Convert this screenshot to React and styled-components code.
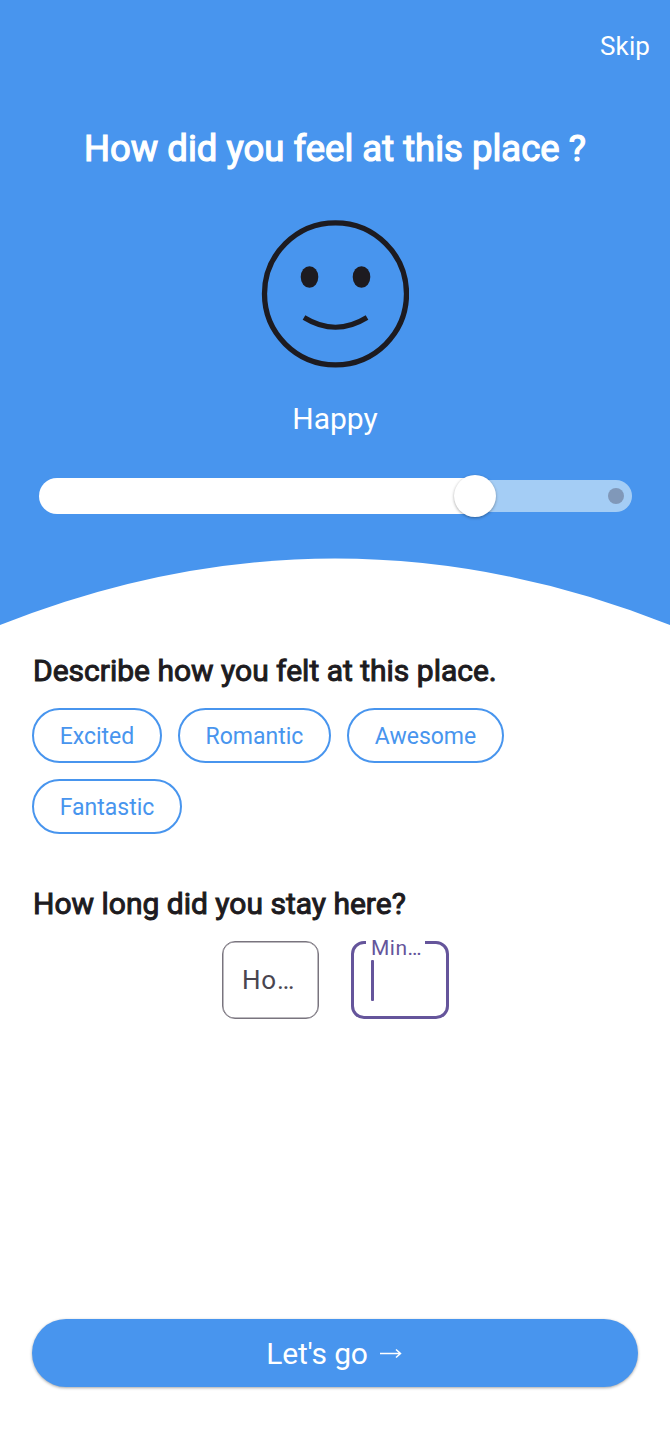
import React from 'react';
import styled, { createGlobalStyle } from 'styled-components';

const Global = createGlobalStyle`
  * { box-sizing: border-box; }
  body { margin: 0; background: #fff; font-family: Roboto, sans-serif; color: #1d1b20; }
`;
const Screen = styled.main`
  display: flex; flex-direction: column; width: 670px; height: 1452px; overflow: hidden; background: #fff;
`;
const Hero = styled.header`
  display: flex; flex-direction: column; align-items: center; flex: none; height: 625px;
  background: #4895ee; color: #fff; padding-top: 31px;
`;
const Skip = styled.button`
  align-self: flex-end; margin-right: 20px; padding: 0; border: 0; background: none; color: #fff;
  font: 400 26px/30px Roboto, sans-serif; letter-spacing: 0.1px;
`;
const Question = styled.h1`
  margin: 66px 0 0; font-size: 36.5px; line-height: 44px; font-weight: 400; white-space: nowrap;
  -webkit-text-stroke: 1.2px currentColor;
`;
const Face = styled.svg`
  display: block; flex: none; width: 148px; height: 148px; margin-top: 49px;
`;
const Mood = styled.div`
  margin-top: 33px; font-size: 30px; line-height: 36px; letter-spacing: 0;
`;
const Slider = styled.div`
  display: flex; align-items: center; width: 593px; height: 42px; margin: 38px 0 41px;
`;
const Filled = styled.div`
  width: 436px; height: 36px; background: #fff; border-radius: 18px 0 0 18px;
`;
const Thumb = styled.div`
  flex: none; width: 42px; height: 42px; margin: 0 -21px; border-radius: 50%; background: #fff;
  box-shadow: 0 1px 3px rgba(0,0,0,.35); z-index: 1;
`;
const Rest = styled.div`
  display: flex; flex: 1; align-items: center; justify-content: flex-end; height: 32px; padding-right: 8px;
  border-radius: 0 16px 16px 0; background: #a4cdf5;
`;
const Tick = styled.i`
  width: 16px; height: 16px; border-radius: 50%; background: #8098b9;
`;
const Wave = styled.svg`
  display: block; flex: none; width: 670px; height: 67px;
`;
const Section = styled.section`
  padding: 0 32px; margin-top: ${p => p.$top}px;
`;
const Heading = styled.h2`
  margin: 0; padding: 1px 0 0 1px; font-size: 30px; line-height: 35px; font-weight: 400; white-space: nowrap;
  -webkit-text-stroke: 1px currentColor;
`;
const Chips = styled.div`
  display: flex; flex-wrap: wrap; gap: 16px; margin-top: 20px;
`;
const Chip = styled.button`
  width: ${p => p.$width}px; height: 55px; padding: 2px 0 0; border: 2px solid #4895ee; border-radius: 28px;
  background: #fff; color: #4895ee; font: 400 23px/28px Roboto, sans-serif;
`;
const Fields = styled.div`
  display: flex; justify-content: center; gap: 32px; margin-top: 20px; padding-left: 1px;
`;
const Field = styled.div`
  display: flex; align-items: center; width: 97px; height: 78px; padding-left: 19px;
  border: 1px solid #79747e; box-shadow: inset 0 0 0 0.5px #79747e; border-radius: 13px;
  color: #49454f; font-size: 26px; line-height: 30px; letter-spacing: 0.8px; padding-bottom: 1px;
`;
const ActiveField = styled.div`
  position: relative; width: 98px; height: 78px; padding: 16px 0 0 17px;
  border: 3px solid #65559b; border-radius: 13px; color: #65559b;
`;
const Label = styled.span`
  position: absolute; top: -6px; left: 12px; width: 59px; padding-left: 5px; background: #fff;
  font-size: 21px; line-height: 20px; letter-spacing: 0.5px; white-space: nowrap;
`;
const Caret = styled.div`
  width: 3px; height: 41px; background: #65559b; border-radius: 1px;
`;
const Go = styled.button`
  display: flex; align-items: center; justify-content: center; gap: 12px; width: 606px; height: 68px;
  margin: auto 32px 65px; padding: 1px 2px 0 0; border: 0; border-radius: 34px; background: #4895ee; color: #fff;
  font: 400 30px/36px Roboto, sans-serif; letter-spacing: -0.15px; box-shadow: 0 1px 3px rgba(0,0,0,.35);
`;

export default function App() {
  return (
    <Screen>
      <Global />
      <Hero>
        <Skip>Skip</Skip>
        <Question>How did you feel at this place ?</Question>
        <Face viewBox="0 0 148 148">
          <circle cx="74.5" cy="73.8" r="71" fill="none" stroke="#1d1b20" strokeWidth="5.3" />
          <ellipse cx="48.5" cy="57" rx="8.8" ry="10.8" fill="#1d1b20" />
          <ellipse cx="100.5" cy="57" rx="8.8" ry="10.8" fill="#1d1b20" />
          <path d="M43 97.5Q74.5 117 106 97.5" fill="none" stroke="#1d1b20" strokeWidth="5" />
        </Face>
        <Mood>Happy</Mood>
        <Slider><Filled /><Thumb /><Rest><Tick /></Rest></Slider>
        <Wave viewBox="0 0 670 67"><path d="M0 67Q335 -66 670 67Z" fill="#fff" /></Wave>
      </Hero>
      <Section $top={27}>
        <Heading>Describe how you felt at this place.</Heading>
        <Chips>
          <Chip $width={130}>Excited</Chip>
          <Chip $width={153}>Romantic</Chip>
          <Chip $width={157}>Awesome</Chip>
          <Chip $width={150}>Fantastic</Chip>
        </Chips>
      </Section>
      <Section $top={51}>
        <Heading>How long did you stay here?</Heading>
        <Fields>
          <Field>Ho…</Field>
          <ActiveField><Label>Min…</Label><Caret /></ActiveField>
        </Fields>
      </Section>
      <Go><span>Let's go</span>
        <svg width="22" height="16" viewBox="0 0 22 16" fill="none" stroke="#fff" strokeWidth="1.5"><path d="M0 7.5H20M16 3.5L20.5 7.5L16 11.5" /></svg>
      </Go>
    </Screen>
  );
}
